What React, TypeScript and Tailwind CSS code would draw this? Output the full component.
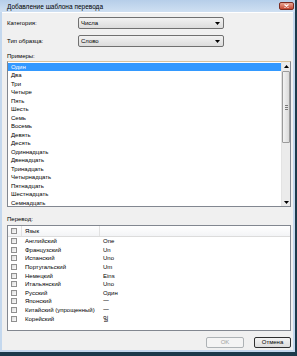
import React from "react";

const items = [
  "Один", "Два", "Три", "Четыре", "Пять", "Шесть", "Семь", "Восемь", "Девять", "Десять",
  "Одиннадцать", "Двенадцать", "Тринадцать", "Четырнадцать", "Пятнадцать", "Шестнадцать", "Семнадцать",
];

const langs: [string, string][] = [
  ["Английский", "One"],
  ["Французский", "Un"],
  ["Испанский", "Uno"],
  ["Португальский", "Um"],
  ["Немецкий", "Eins"],
  ["Итальянский", "Uno"],
  ["Русский", "Один"],
  ["Японский", "一"],
  ["Китайский (упрощенный)", "一"],
  ["Корейский", "일"],
];

function Arrow({ up }: { up?: boolean }) {
  return (
    <svg width="5" height="3" viewBox="0 0 5 3">
      {up ? <polygon points="0,3 5,3 2.5,0" fill="#000" /> : <polygon points="0,0 5,0 2.5,3" fill="#000" />}
    </svg>
  );
}

function Combo({ text }: { text: string }) {
  return (
    <div className="w-[146px] h-[12px] flex items-center justify-between rounded-[2px] border border-[#707070] bg-gradient-to-b from-[#f2f2f2] to-[#dcdcdc] pl-[2px] pr-[3px]">
      <span className="leading-[10px]">{text}</span>
      <Arrow />
    </div>
  );
}

function Check() {
  return <div className="w-[6px] h-[6px] border border-[#8f8f8f] bg-gradient-to-br from-[#dcdcdc] to-[#fbfbfb]" />;
}

export default function App() {
  return (
    <div className="w-[297px] h-[356px] bg-[#1c3a4b] font-['Liberation_Sans','Noto_Sans_CJK_KR',sans-serif] text-[6px] text-black overflow-hidden">
      <div className="w-[295px] h-[352px] flex flex-col bg-[#c4d8ee] px-[2px] pb-[2px]">
        {/* title bar */}
        <div className="h-[12px] -mx-[2px] flex items-start justify-between bg-gradient-to-b from-[#b6cee9] to-[#cfe0f2]">
          <span className="pl-[7px] pt-[3px] text-[6.5px] leading-[7px]">Добавление шаблона перевода</span>
          <div className="mt-[2px] mr-[1px] w-[15px] h-[8px] rounded-[2px] border border-[#7b2c22] bg-gradient-to-b from-[#e8a493] to-[#c4452f] flex items-center justify-center">
            <svg width="5" height="4" viewBox="0 0 5 4">
              <path d="M0.5 0.5 L4.5 3.5 M4.5 0.5 L0.5 3.5" stroke="#fff" strokeWidth="1.2" />
            </svg>
          </div>
        </div>
        {/* body */}
        <div className="flex-1 flex flex-col bg-[#f0f0f0] border-t border-white pl-[5px] pr-[2px]">
          <div className="mt-[4px] h-[12px] flex items-center">
            <span className="w-[71px]">Категория:</span>
            <Combo text="Числа" />
          </div>
          <div className="mt-[6px] h-[12px] flex items-center">
            <span className="w-[71px]">Тип образца:</span>
            <Combo text="Слово" />
          </div>
          <div className="mt-[5px] h-[8px] leading-[8px]">Примеры:</div>
          {/* list box */}
          <div className="mt-[1px] h-[146px] flex border border-[#828790] border-t-[#d9c39c] bg-white">
            <div className="flex-1 flex flex-col pt-[0.5px]">
              {items.map((t, i) => (
                <div
                  key={t}
                  className={
                    "h-[8.5px] leading-[8.5px] pl-[3px] " + (i === 0 ? "bg-[#3399ff] text-white" : "")
                  }
                >
                  {t}
                </div>
              ))}
            </div>
            <div className="w-[9px] flex flex-col items-center bg-[#ebebeb] border-l border-[#e3e3e3]">
              <div className="h-[8px] w-full flex items-center justify-center">
                <Arrow up />
              </div>
              <div className="mt-[1px] h-[72px] w-[8px] rounded-[1px] border border-[#9b9b9b] bg-gradient-to-r from-[#f3f3f3] to-[#dadada] flex flex-col items-center justify-center gap-[1px]">
                <div className="w-[3px] h-[1px] bg-[#7a7a7a]" />
                <div className="w-[3px] h-[1px] bg-[#7a7a7a]" />
                <div className="w-[3px] h-[1px] bg-[#7a7a7a]" />
              </div>
              <div className="flex-1" />
              <div className="h-[8px] w-full flex items-center justify-center">
                <Arrow />
              </div>
            </div>
          </div>
          <div className="mt-[8px] h-[8px] leading-[8px]">Перевод:</div>
          {/* table */}
          <div className="mt-[2px] h-[106px] flex flex-col border border-[#828790] bg-white">
            <div className="h-[11px] flex items-stretch bg-gradient-to-b from-white to-[#f3f4f6] border-b border-[#dcdcdc]">
              <div className="w-[14px] flex items-center pl-[3px] border-r border-[#e2e2e2]">
                <Check />
              </div>
              <div className="w-[78px] flex items-center pl-[3px] border-r border-[#e2e2e2]">Язык</div>
              <div className="flex-1" />
            </div>
            {langs.map(([l, v]) => (
              <div key={l} className="h-[8.6px] flex items-center">
                <div className="w-[14px] pl-[3px] flex items-center">
                  <Check />
                </div>
                <div className="w-[78px] pl-[3px] leading-[8px]">{l}</div>
                <div className="pl-[3px] leading-[8px]">{v}</div>
              </div>
            ))}
          </div>
          {/* buttons */}
          <div className="mt-[6px] flex justify-end gap-[10px]">
            <div className="w-[38px] h-[11px] flex items-center justify-center rounded-[2px] border border-[#adb2b5] bg-[#f4f4f4] text-[#a0a0a0]">
              OK
            </div>
            <div className="w-[37px] h-[11px] flex items-center justify-center rounded-[2px] border border-[#2f2f2f] bg-gradient-to-b from-[#f4f4f4] to-[#dcdcdc]">
              Отмена
            </div>
          </div>
        </div>
      </div>
    </div>
  );
}
